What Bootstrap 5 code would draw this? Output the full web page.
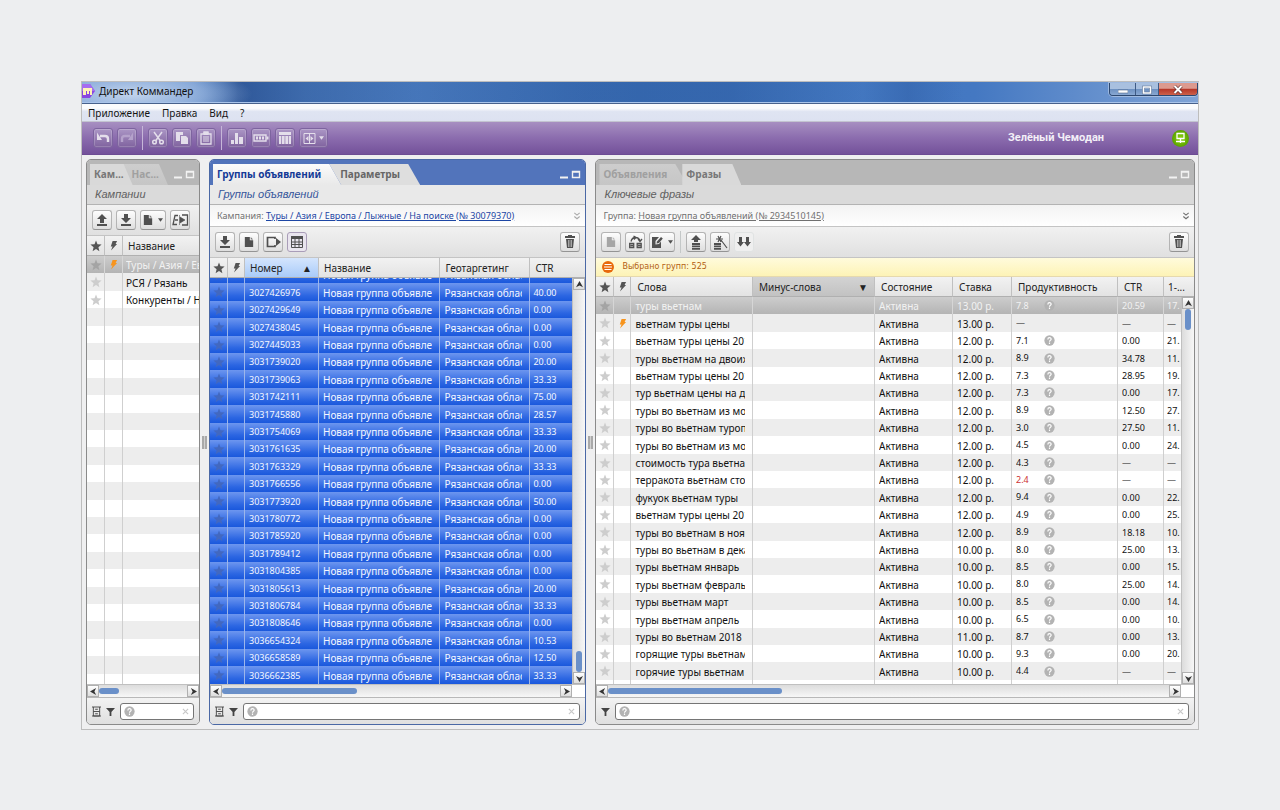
<!DOCTYPE html>
<html lang="ru">
<head>
<meta charset="utf-8">
<meta name="viewport" content="width=device-width, initial-scale=1">
<title>Директ Коммандер</title>
<link href="https://cdn.jsdelivr.net/npm/bootstrap@5.3.0/dist/css/bootstrap.min.css" rel="stylesheet">
<style>
  body { background: #edeef0; color: #1a1a1a; font: 10px/16px "Noto Sans", "Open Sans", sans-serif; padding: 81px; }
  button { font: inherit; padding: 0; color: inherit; }
  svg { display: block; flex: none; }

  .app-window { border: 1px solid #bdbdbd; background: #efeff0; }

  /* title bar */
  .titlebar {
    height: 22px; border-bottom: 1px solid #47618c; box-shadow: inset 0 -1px #a9c4ea; color: #111; padding-top: 1px;
    background:
      radial-gradient(ellipse 120px 30px at 50px 12px, rgba(205,220,240,.9), rgba(170,195,230,.6) 60%, transparent),
      linear-gradient(90deg, transparent 10%, rgba(10,45,110,.5) 14%, rgba(15,55,120,.3) 20%, rgba(20,60,130,.1) 30%, rgba(20,60,130,.25) 45%, rgba(20,60,130,.25) 58%, transparent 70%, rgba(20,60,130,.2) 74%, transparent 79%),
      linear-gradient(90deg, #5d89c8, #3f74bb 50%, #4478c2 80%, #7fa3d6);
  }
  .win-controls { height: 13px; border: 1px solid #2d4870; border-top: 0; border-radius: 0 0 4px 4px; overflow: hidden; box-shadow: 0 0 0 1px rgba(255,255,255,.35); }
  .win-controls button { border: 0; border-right: 1px solid #3f5b85; background: linear-gradient(#a9c0df 45%, #6f92c2 50%, #8dacd6); width: 26px; height: 13px; }
  .win-controls button:nth-child(2) { width: 23px; }
  .win-controls .win-close { width: 38px; border-right: 0; background: linear-gradient(#dc9a8f 40%, #b8392a 50%, #d06850); }

  /* menu */
  .menubar { height: 18px; background: linear-gradient(#fafbfd 25%, #dfe4f2 45%, #dde2f1); border-bottom: 1px solid #c3c4d0; padding: 0 2px; }
  .menubar a { color: #151515; text-decoration: none; }

  /* purple toolbar */
  .main-toolbar { height: 33px; background: linear-gradient(#a78fc1, #8b6cae 50%, #73519a); border-bottom: 1px solid #6d4c93; color: #fff; }
  .main-tools { padding-left: 11px; gap: 4px; }
  .tool-btn { width: 20px; height: 20px; border: 1px solid #7d649f; border-radius: 3px; background: linear-gradient(#ab96c5, #80639f); box-shadow: inset 0 0 0 1px rgba(255,255,255,.18); display: flex; align-items: center; justify-content: center; color: #e4deeb; }
  .tool-btn.wide { width: 29px; gap: 3px; }
  .tool-btn:disabled { color: #b5a2cb; }
  .tool-sep { width: 1px; height: 24px; background: #c6b6d8; margin: 0 1px; }
  .account { font: bold 11px/16px Roboto, "Liberation Sans", sans-serif; padding-right: 68px; color: #f3eff7; }
  .online { width: 17px; height: 17px; border-radius: 50%; background: radial-gradient(#8fd410, #5aa300 70%, #4a7f10); margin-right: 9px; }

  /* panels */
  .panels { padding: 4px 3px 4px 4px; }
  .panel { border: 1px solid #8a8a8a; border-radius: 5px; background: #ececec; overflow: hidden; min-width: 0; }
  .panel-a { flex: 0 0 114px; }
  .panel-b { flex: 377 1 0; border-color: #4a68a5; }
  .panel-c { flex: 600 1 0; }
  .gripper { flex: 0 0 9px; }
  .gripper i { width: 5px; height: 13px; border: solid #a9a9a9; border-width: 0 2px; background: #d0d0d0; }

  .tabbar { height: 25px; background: #b7b7b7; padding: 4px 3px 0 3px; }
  .panel-b .tabbar { background: #5274bb; }
  .tab { border: 0; height: 21px; padding: 0 20px 2px 4px; font-weight: 700; color: #a0a0a0; background: linear-gradient(#cdcdcd, #c6c6c6); clip-path: polygon(0 0, calc(100% - 12px) 0, 100% 100%, 0 100%); white-space: nowrap; text-align: left; }
  .tab.active { color: #777; background: #d9d9d9; position: relative; z-index: 1; }
  .tab + .tab { margin-left: -12px; padding-left: 11px; clip-path: polygon(0 0, calc(100% - 12px) 0, 100% 100%, 12px 100%); }
  .tab + .tab.active { clip-path: polygon(7px 0, calc(100% - 9px) 0, 100% 100%, 7px 100%); }
  .panel-a .tab { padding-right: 9px; clip-path: polygon(0 0, calc(100% - 9px) 0, 100% 100%, 0 100%); }
  .panel-b .tab { color: #666; background: #dedede; }
  .panel-b .tab.active { color: #143a96; background: linear-gradient(#fbfbfb, #e9e9e9); }
  .tab-ctl { border: 0; background: none; color: #f2f2f2; width: 12px; height: 12px; }

  .panel-title { height: 20px; background: #dadada; border-bottom: 1px solid #b3b3b3; padding: 0 8px; font: italic 11px/18px "Liberation Sans", Arial, sans-serif; color: #606060; }
  .panel-b .panel-title { background: #e9e9e9; color: #34549a; }
  .address { height: 22px; background: linear-gradient(#f3f3f3, #fff); border-bottom: 1px solid #c4c4c4; padding: 0 4px 0 7px; font-size: 9px; color: #707070; }
  .address a { color: #707070; }
  .panel-b .address a { color: #1c46a4; }
  .panel-b .address svg { color: #aaa; }
  .panel-tools { height: 31px; background: linear-gradient(#f1f1f1, #e0e0e0); border-bottom: 1px solid #c4c4c4; padding: 0 5px; gap: 4px; }
  .pbtn { width: 20px; height: 20px; border: 1px solid #b4b4b4; border-bottom-color: #949494; border-radius: 3px; background: linear-gradient(#fdfdfd, #dedede); color: #505050; display: flex; align-items: center; justify-content: center; flex: none; }
  .pbtn.wide { width: 26px; gap: 5px; }
  .pbtn.toggled { border-color: #a99db8; background: #e9e5ee; }
  .pbtn.flat { border-color: #e0e3e3; background: #efefef; }
  .pbtn:disabled { color: #a5a5a5; }
  .pbtn-sep { width: 1px; height: 22px; background: #c4c8c8; margin: 0 1px; }
  .notice { height: 19px; background: linear-gradient(#fffbdc, #fdf3b6); border-bottom: 1px solid #e6d9ae; color: #b35f14; font: 8px/16px "DejaVu Sans", sans-serif; padding: 0 6px; gap: 8px; }

  /* grids */
  .grid { width: 100%; table-layout: fixed; border-collapse: separate; border-spacing: 0; white-space: nowrap; }
  .grid th { height: 20px; padding: 0 6px 0 5px; font-weight: 400; border-right: 1px solid #c0c0c0; border-bottom: 1px solid #b0b0b0; background: linear-gradient(#f2f2f2, #e3e3e3); overflow: hidden; color: #222; }
  .panel-c .grid th { padding-left: 6px; }
  .grid th:last-child { border-right: 0; }
  .panel .grid th.ico, .grid td.ico { padding: 0; color: #555; }
  .ico svg { margin: auto; }
  .grid td { height: 17px; padding: 0 7px 0 4px; line-height: 18px; border-right: 1px solid #cfcfcf; color: #111; }
  .grid td.num { font-size: 9px; }
  .grid tr:nth-child(5n+2) td, .grid tr:nth-child(5n+4) td { height: 18px; }
  .grid td:last-child { border-right: 0; padding-right: 0; padding-left: 3px; }
  .grid td > div { overflow: hidden; height: 17px; }
  .grid tr:nth-child(even) td { background: #ededed; }
  .grid tr:nth-child(odd) td { background: #fff; }
  .grid td .star { color: #cdcdcd; }
  .grid tbody tr.chosen td { background: linear-gradient(#cdcdcd, #b4b4b4); color: #f2f2f2; border-color: #d6d6d6; }
  .grid tr.chosen .star { color: #a4a4a4; }
  .grid.all-chosen tbody td { background: linear-gradient(#6d96ef, #2c66e2 70%, #1a58dc); color: #f4f7ff; border-color: #9db6ea; }
  .grid.all-chosen .star { color: #4268c0; }
  .grid th.sorted { background: linear-gradient(#d4e5fd, #a9cbf9); }
  .panel-c .grid th.sorted { background: linear-gradient(#d3d3d3, #c2c2c2); }
  .prod { width: 28px; }
  .low { color: #c33 !important; }
  .bolt-on { color: #f7941d; }
  .rows { flex: 1 1 0px; min-height: 0; overflow: hidden; }
  .panel-c .rows { flex-basis: 387px; }
  .rows-view { overflow: hidden; min-width: 0; background: #fff; }
  .from-end { display: flex; flex-direction: column; justify-content: flex-end; }

  /* scroll bars */
  .vbar { width: 13px; flex: none; background: linear-gradient(90deg, #dcdcdc, #f7f7f7); border-left: 1px solid #c0c0c0; }
  .hbar { height: 13px; background: linear-gradient(#dcdcdc, #f7f7f7); border-top: 1px solid #c0c0c0; }
  .arrow { border: 1px solid #b0b0b0; background: linear-gradient(#fff, #ddd); width: 12px; height: 12px; color: #333; display: flex; align-items: center; justify-content: center; flex: none; }
  .thumb { background: #6a90c9; border-radius: 3px; }
  .hbar .thumb { height: 6px; }
  .vbar .thumb { width: 6px; height: 21px; }
  .corner { width: 13px; background: #fff; flex: none; align-self: stretch; }

  .panel-foot { height: 27px; background: linear-gradient(#f3f3f3, #dfdfdf); border-top: 1px solid #b8b8b8; padding: 0 5px; gap: 5px; color: #444; }
  .finder { height: 17px; border: 1px solid #757575; border-radius: 3px; background: #fff; padding: 0 4px 0 3px; color: #c8c8c8; min-width: 0; }
  .finder input { border: 0; outline: 0; background: none; min-width: 0; width: 100%; font: inherit; }
  .qm { color: #b3b3b3; }
</style>
</head>
<body>
<svg class="d-none" aria-hidden="true">
  <symbol id="star" viewBox="0 0 12 12"><path fill="currentColor" d="M6 .5 7.5 4.3 11.6 4.6 8.4 7.2 9.4 11.2 6 9 2.6 11.2 3.6 7.2 .4 4.6 4.5 4.3z"/></symbol>
  <symbol id="bolt" viewBox="0 0 10 12"><path fill="currentColor" d="M4 1h5L7.3 4.2H9L2.2 11.5 4 7H2z"/></symbol>
  <symbol id="q" viewBox="0 0 12 12"><circle cx="6" cy="6" r="5.6" fill="currentColor"/><path d="M4.2 4.8c0-2.5 3.6-2.4 3.6-.3C7.800 5.800 6 5.700 6 7.300M6 8.300v1.400" fill="none" stroke="#fff" stroke-width="1.300"/></symbol>
  <symbol id="x" viewBox="0 0 8 8"><path d="M1 1l6 6M7 1 1 7" stroke="currentColor" stroke-width="1.300" fill="none"/></symbol>
  <symbol id="page" viewBox="0 0 12 14"><path fill="currentColor" d="M1 1h6v4h4v8H1z"/><path fill="currentColor" opacity=".75" d="M8 1l3 3H8z"/></symbol>
  <symbol id="down" viewBox="0 0 12 14"><path fill="currentColor" d="M4 1h4v4h3L6 10 1 5h3zM1 11h10v2H1z"/></symbol>
  <symbol id="up" viewBox="0 0 12 14"><path fill="currentColor" d="M4 10h4V6h3L6 1 1 6h3zM1 11h10v2H1z"/></symbol>
  <symbol id="caret" viewBox="0 0 6 4"><path fill="currentColor" d="M0 0h6L3 4z"/></symbol>
  <symbol id="trash" viewBox="0 0 12 14"><path fill="currentColor" d="M4 0h4v1h3v2H1V1h3zM2 4h8l-1 9H3z"/><path stroke="#ccc" d="M4.500 5v7M7.500 5v7M6 5v7" stroke-width=".7"/></symbol>
  <symbol id="funnel" viewBox="0 0 10 10"><path fill="currentColor" d="M0 1h10L6 5.500V10H4V5.500z"/></symbol>
  <symbol id="cabinet" viewBox="0 0 10 12"><path d="M0 1h10M1.500 1v10h7V1M1.500 6h7M3.500 3.500h3M3.500 8.500h3M0 11h10" stroke="currentColor" fill="none"/></symbol>
  <symbol id="minw" viewBox="0 0 12 12"><path d="M2 9.500h8" stroke="currentColor" stroke-width="2"/></symbol>
  <symbol id="maxw" viewBox="0 0 12 12"><path d="M2.500 3.500h7v6h-7zM2 4h8" stroke="currentColor" stroke-width="1.400" fill="none"/></symbol>
  <symbol id="chev" viewBox="0 0 8 9"><path d="M1 1l3 2.500L7 1M1 5l3 2.500L7 5" stroke="currentColor" stroke-width="1.300" fill="none"/></symbol>
  <symbol id="al" viewBox="0 0 8 8"><path fill="currentColor" d="M7 0 0 4l7 4-2-4z"/></symbol>
  <symbol id="ar" viewBox="0 0 8 8"><path fill="currentColor" d="M1 0l7 4-7 4 2-4z"/></symbol>
  <symbol id="au" viewBox="0 0 8 8"><path fill="currentColor" d="M4 0l4 7-4-2-4 2z"/></symbol>
  <symbol id="ad" viewBox="0 0 8 8"><path fill="currentColor" d="M4 8 0 1l4 2 4-2z"/></symbol>
</svg>

<main class="app-window">
  <header class="titlebar d-flex align-items-start justify-content-between">
    <div class="d-flex align-items-center gap-1">
      <svg width="13" height="14" viewBox="0 0 13 14"><path d="M0 0h8l5 7-5 7H0z" fill="#8a46e0"/><path d="M0 0h8l5 7H0z" fill="#a66cf0"/><path d="M1 4h9v7H8V7H7v3H5V7H4v4H1z" fill="#fff3b8"/></svg>
      <span>Директ Коммандер</span>
    </div>
    <div class="win-controls d-flex">
      <button type="button" aria-label="Свернуть"><svg class="m-auto" width="10" height="10"><path d="M0 5h10v3H0z" fill="#fff" stroke="#536a8c" stroke-width=".6"/></svg></button>
      <button type="button" aria-label="Развернуть"><svg class="m-auto" width="10" height="10"><path d="M1.500 2h7v6h-7z" fill="none" stroke="#536a8c" stroke-width="2.600"/><path d="M1.500 2h7v6h-7z" fill="none" stroke="#fff" stroke-width="1.600"/></svg></button>
      <button type="button" class="win-close" aria-label="Закрыть"><svg class="m-auto" width="10" height="10"><path d="M1.500 1l7 7M8.500 1l-7 7" stroke="#5c2a2a" stroke-width="3.200"/><path d="M1.500 1l7 7M8.500 1l-7 7" stroke="#fff" stroke-width="2"/></svg></button>
    </div>
  </header>

  <nav class="menubar d-flex align-items-center gap-2">
    <a class="px-1" href="#">Приложение</a><a class="px-0" href="#">Правка</a><a class="px-1" href="#">Вид</a><a href="#">?</a>
  </nav>

  <div class="main-toolbar d-flex align-items-center">
    <div class="main-tools d-flex align-items-center">
      <button class="tool-btn" aria-label="Отменить"><svg width="14" height="14"><path d="M4 5h5q3 0 3 3v3" stroke="currentColor" stroke-width="2.400" fill="none"/><path d="M1 5.500V1.500L6 9H1z" fill="currentColor"/></svg></button>
      <button class="tool-btn" disabled aria-label="Повторить"><svg width="14" height="14"><path d="M10 5H5Q2 5 2 8v3" stroke="currentColor" stroke-width="2.400" fill="none"/><path d="M13 5.500V1.500L8 9h5z" fill="currentColor"/></svg></button>
      <i class="tool-sep"></i>
      <button class="tool-btn" aria-label="Вырезать"><svg width="14" height="14" fill="none" stroke="currentColor" stroke-width="1.500"><path d="M3 1l6.500 9M11 1 4.500 10"/><circle cx="3.500" cy="11" r="1.800"/><circle cx="10.500" cy="11" r="1.800"/></svg></button>
      <button class="tool-btn" aria-label="Копировать"><svg width="14" height="14" fill="currentColor"><path d="M1 1h7v3H5v6H1z"/><path d="M6 5h5l2 2v6H6z"/></svg></button>
      <button class="tool-btn" aria-label="Вставить"><svg width="14" height="14"><path d="M5 1h4v2h3v10H2V3h3z" fill="none" stroke="currentColor" stroke-width="1.300"/><path d="M4.500 1h5v3h-5zM4 5.500h6v1H4zm0 2h6v1H4zm0 2h6v1H4z" fill="currentColor"/></svg></button>
      <i class="tool-sep"></i>
      <button class="tool-btn" aria-label="Статистика"><svg width="14" height="14" fill="currentColor"><path d="M1 9h3v4H1zM5 2h3v11H5zM9 6h4v7H9z"/></svg></button>
      <button class="tool-btn" aria-label="Баллы"><svg width="16" height="14"><path d="M1 4h12v6H1z" fill="none" stroke="currentColor" stroke-width="1.400"/><path d="M3 5.500h2v3H3zm3 0h2v3H6zm3 0h2v3H9zM13.500 5.500h2v3h-2z" fill="currentColor"/></svg></button>
      <button class="tool-btn" aria-label="Столбцы"><svg width="14" height="14" fill="currentColor"><path d="M1 1h12v3H1zM1 5h2.300v8H1zm3 0h2.600v8H4zm3.300 0H10v8H7.300zM10.700 5H13v8h-2.300z"/></svg></button>
      <button class="tool-btn wide" aria-label="Вид панелей"><svg width="13" height="13"><path d="M1 1.500h11v10H1zM6.500 1v11" fill="none" stroke="currentColor"/><path d="M5.500 4v5L2.500 6.500zM7.500 4v5l3-2.500z" fill="currentColor"/></svg><svg width="5" height="4"><use href="#caret"/></svg></button>
    </div>
    <span class="account ms-auto">Зелёный Чемодан</span>
    <span class="online d-flex"><svg class="m-auto" width="11" height="12"><path d="M2 1.500h7v5H2zM5.500 7v4M1 9.500h9" stroke="#fff" stroke-width="1.300" fill="none"/></svg></span>
  </div>

  <div class="panels d-flex align-items-stretch">
    <section class="panel panel-a d-flex flex-column">
      <div class="tabbar d-flex align-items-start">
        <button class="tab active">Кам...</button><button class="tab">Нас...</button>
        <div class="d-flex ms-auto mt-1"><button class="tab-ctl" aria-label="Свернуть"><svg width="12" height="12"><use href="#minw"/></svg></button><button class="tab-ctl" aria-label="Развернуть"><svg width="12" height="12"><use href="#maxw"/></svg></button></div>
      </div>
      <div class="panel-title">Кампании</div>
      <div class="panel-tools d-flex align-items-center">
        <button class="pbtn" aria-label="Отправить"><svg width="12" height="14"><use href="#up"/></svg></button>
        <button class="pbtn" aria-label="Получить"><svg width="12" height="14"><use href="#down"/></svg></button>
        <button class="pbtn wide" aria-label="Создать"><svg width="10" height="12"><use href="#page"/></svg><svg width="5" height="4"><use href="#caret"/></svg></button>
        <button class="pbtn" aria-label="Переименовать"><svg width="17" height="12" fill="none" stroke="currentColor" stroke-width="1.300"><path d="M6 1.500H3L1 10.500h4M3 6h3M10 1h5.500v10H10"/><path d="M7.500 1v10M8 3l5 3-5 3z" fill="currentColor" stroke-width=".6"/></svg></button>
      </div>
      <table class="grid"><colgroup><col style="width:18px"><col style="width:18px"><col></colgroup>
        <thead><tr><th class="ico"><svg width="12" height="12"><use href="#star"/></svg></th><th class="ico"><svg width="9" height="11"><use href="#bolt"/></svg></th><th>Название</th></tr></thead></table>
      <div class="rows rows-view"><table class="grid"><colgroup><col style="width:18px"><col style="width:18px"><col></colgroup><tbody id="campaigns"></tbody></table></div>
      <div class="hbar d-flex align-items-center"><button class="arrow" aria-label="Влево"><svg width="7" height="7"><use href="#al"/></svg></button><i class="thumb" style="width:20px"></i><button class="arrow ms-auto" aria-label="Вправо"><svg width="7" height="7"><use href="#ar"/></svg></button></div>
      <div class="panel-foot d-flex align-items-center">
        <svg width="9" height="11"><use href="#cabinet"/></svg><svg width="9" height="9"><use href="#funnel"/></svg>
        <label class="finder d-flex align-items-center flex-fill"><svg class="qm" width="11" height="11"><use href="#q"/></svg><input type="text" aria-label="Поиск кампаний"><svg width="7" height="7"><use href="#x"/></svg></label>
      </div>
    </section>

    <div class="gripper d-flex align-items-center justify-content-center"><i></i></div>

    <section class="panel panel-b d-flex flex-column">
      <div class="tabbar d-flex align-items-start">
        <button class="tab active">Группы объявлений</button><button class="tab">Параметры</button>
        <div class="d-flex ms-auto mt-1"><button class="tab-ctl" aria-label="Свернуть"><svg width="12" height="12"><use href="#minw"/></svg></button><button class="tab-ctl" aria-label="Развернуть"><svg width="12" height="12"><use href="#maxw"/></svg></button></div>
      </div>
      <div class="panel-title">Группы объявлений</div>
      <div class="address d-flex align-items-center"><span>Кампания: <a href="#">Туры / Азия / Европа / Лыжные / На поиске (№ 30079370)</a></span><svg class="ms-auto" width="8" height="8"><use href="#chev"/></svg></div>
      <div class="panel-tools d-flex align-items-center">
        <button class="pbtn" aria-label="Получить"><svg width="12" height="14"><use href="#down"/></svg></button>
        <button class="pbtn" aria-label="Создать"><svg width="10" height="12"><use href="#page"/></svg></button>
        <button class="pbtn" aria-label="Переместить"><svg width="15" height="12"><path d="M6 1.500H1.500v9H9V9M6 1.500h3V3" fill="none" stroke="currentColor" stroke-width="1.700"/><path d="M10 2l5 4-5 4z" fill="currentColor"/></svg></button>
        <button class="pbtn toggled" aria-label="Таблица"><svg width="12" height="12"><path d="M.5 1h11v10.500H.5zM.5 6h11M.5 8.500h11M4 3v8M8 3v8" fill="none" stroke="currentColor"/><path d="M0 0h12v3H0z" fill="currentColor"/></svg></button>
        <button class="pbtn ms-auto" aria-label="Удалить"><svg width="12" height="14"><use href="#trash"/></svg></button>
      </div>
      <table class="grid"><colgroup id="cols-bh"></colgroup>
        <thead><tr><th class="ico"><svg width="12" height="12"><use href="#star"/></svg></th><th class="ico"><svg width="9" height="11"><use href="#bolt"/></svg></th><th class="sorted"><div class="d-flex justify-content-between"><span>Номер</span><span>▲</span></div></th><th>Название</th><th>Геотаргетинг</th><th>CTR</th></tr></thead></table>
      <div class="rows d-flex">
        <div class="rows-view from-end flex-fill"><table class="grid all-chosen"><colgroup id="cols-b"></colgroup><tbody id="groups"></tbody></table></div>
        <div class="vbar d-flex flex-column align-items-center"><button class="arrow" aria-label="Вверх"><svg width="7" height="7"><use href="#au"/></svg></button><i class="thumb mt-auto"></i><button class="arrow" aria-label="Вниз"><svg width="7" height="7"><use href="#ad"/></svg></button></div>
      </div>
      <div class="hbar d-flex align-items-center"><button class="arrow" aria-label="Влево"><svg width="7" height="7"><use href="#al"/></svg></button><i class="thumb" style="width:36%"></i><button class="arrow ms-auto" aria-label="Вправо"><svg width="7" height="7"><use href="#ar"/></svg></button><i class="corner"></i></div>
      <div class="panel-foot d-flex align-items-center">
        <svg width="9" height="11"><use href="#cabinet"/></svg><svg width="9" height="9"><use href="#funnel"/></svg>
        <label class="finder d-flex align-items-center flex-fill"><svg class="qm" width="11" height="11"><use href="#q"/></svg><input type="text" aria-label="Поиск групп"><svg width="7" height="7"><use href="#x"/></svg></label>
      </div>
    </section>

    <div class="gripper d-flex align-items-center justify-content-center"><i></i></div>

    <section class="panel panel-c d-flex flex-column">
      <div class="tabbar d-flex align-items-start">
        <button class="tab">Объявления</button><button class="tab active">Фразы</button>
        <div class="d-flex ms-auto mt-1"><button class="tab-ctl" aria-label="Свернуть"><svg width="12" height="12"><use href="#minw"/></svg></button><button class="tab-ctl" aria-label="Развернуть"><svg width="12" height="12"><use href="#maxw"/></svg></button></div>
      </div>
      <div class="panel-title">Ключевые фразы</div>
      <div class="address d-flex align-items-center"><span>Группа: <a href="#">Новая группа объявлений (№ 2934510145)</a></span><svg class="ms-auto" width="8" height="8"><use href="#chev"/></svg></div>
      <div class="panel-tools d-flex align-items-center">
        <button class="pbtn" disabled aria-label="Создать"><svg width="10" height="12"><use href="#page"/></svg></button>
        <button class="pbtn" aria-label="Заменить"><svg width="15" height="14" fill="none" stroke="currentColor" stroke-width="1.300"><path d="M1.700 8.500h4v4h-4zM9.200 8.500h4v4h-4zM2.500 10.500h2.500M10 10.500h2.500M3 6.500Q4 2.500 7.500 2.500T12 6M10 4l2 2.500L14 4M5.500 1 8 2.500 6 4.500"/></svg></button>
        <button class="pbtn wide" aria-label="Изменить"><svg width="12" height="12"><path d="M1 1h7L4.500 5v3.500L8 8l2-2.500V12H1z" fill="currentColor"/><path d="M5.500 7.500l.5-2L10 1l1.800 1.500L8 7z" fill="currentColor"/></svg><svg width="5" height="4"><use href="#caret"/></svg></button>
        <i class="pbtn-sep"></i>
        <button class="pbtn" aria-label="Поднять ставку"><svg width="12" height="15" fill="currentColor"><path d="M4 7h4V5h3L6 0 1 5h3z"/><path d="M2 8h8v2H2zM2 10.500h8v1.500H2zM2 12.700h8v2H2z"/></svg></button>
        <button class="pbtn" aria-label="Мастер ставок"><svg width="15" height="15" fill="currentColor"><path d="M1 8h7v2H1zM1 10.500h7v1.500H1zM1 12.700h7v2H1z"/><path d="M5 1l3 6M8 1 5 7M3 4h7M8 5l6 8" stroke="currentColor" stroke-width="1.200"/></svg></button>
        <button class="pbtn flat" aria-label="Свернуть все"><svg width="14" height="10" fill="currentColor"><path d="M2 0h3v5h2L3.500 9.500 0 5h2zM9 0h3v5h2l-3.500 4.500L7 5h2z"/></svg></button>
        <button class="pbtn ms-auto" aria-label="Удалить"><svg width="12" height="14"><use href="#trash"/></svg></button>
      </div>
      <div class="notice d-flex align-items-center"><svg width="12" height="12"><circle cx="6" cy="6" r="6" fill="#e8690b"/><path d="M2.500 3.500h7M2 6h8M2.500 8.500h7" stroke="#fff" stroke-width="1.200"/></svg><span>Выбрано групп: 525</span></div>
      <table class="grid"><colgroup id="cols-ch"></colgroup>
        <thead><tr><th class="ico"><svg width="12" height="12"><use href="#star"/></svg></th><th class="ico"><svg width="9" height="11"><use href="#bolt"/></svg></th><th>Слова</th><th class="sorted"><div class="d-flex justify-content-between"><span>Минус-слова</span><span>▼</span></div></th><th>Состояние</th><th>Ставка</th><th>Продуктивность</th><th>CTR</th><th class="px-1">1-...</th></tr></thead></table>
      <div class="rows d-flex">
        <div class="rows-view flex-fill"><table class="grid"><colgroup id="cols-c"></colgroup><tbody id="phrases"></tbody></table></div>
        <div class="vbar d-flex flex-column align-items-center"><button class="arrow" aria-label="Вверх"><svg width="7" height="7"><use href="#au"/></svg></button><i class="thumb"></i><button class="arrow mt-auto" aria-label="Вниз"><svg width="7" height="7"><use href="#ad"/></svg></button></div>
      </div>
      <div class="hbar d-flex align-items-center"><button class="arrow" aria-label="Влево"><svg width="7" height="7"><use href="#al"/></svg></button><i class="thumb" style="width:29%"></i><button class="arrow ms-auto" aria-label="Вправо"><svg width="7" height="7"><use href="#ar"/></svg></button><i class="corner"></i></div>
      <div class="panel-foot d-flex align-items-center">
        <svg width="9" height="9"><use href="#funnel"/></svg>
        <label class="finder d-flex align-items-center flex-fill"><svg class="qm" width="11" height="11"><use href="#q"/></svg><input type="text" aria-label="Поиск фраз"><svg width="7" height="7"><use href="#x"/></svg></label>
      </div>
    </section>
  </div>
</main>

<script src="https://cdn.jsdelivr.net/npm/bootstrap@5.3.0/dist/js/bootstrap.bundle.min.js"></script>
<script>
const star = '<td class="ico"><svg class="star" width="12" height="12"><use href="#star"/></svg></td>';
const bolt = on => `<td class="ico">${on ? '<svg class="bolt-on" width="9" height="11"><use href="#bolt"/></svg>' : ''}</td>`;
const cell = (t, cls = '') => `<td class="${cls}"><div>${t}</div></td>`;
const fill = (id, html) => { document.getElementById(id).innerHTML = html; };
const cols = list => list.map(w => w ? `<col style="width:${w}">` : '<col>').join('');

// header tables are wider than the row tables by the 13px scroll bar
fill('cols-bh', cols(['18px', '17px', '74px', '', '90px', '55px']));
fill('cols-b', cols(['18px', '17px', '74px', '', '90px', '42px']));
fill('cols-ch', cols(['18px', '17px', '', '122px', '78px', '59px', '106px', '46px', '30px']));
fill('cols-c', cols(['18px', '17px', '', '122px', '78px', '59px', '106px', '46px', '17px']));

// campaigns, padded with empty rows
const campaigns = ['Туры / Азия / Европа', 'РСЯ / Рязань', 'Конкуренты / НН', ...Array(22).fill('')];
fill('campaigns', campaigns.map((n, i) =>
  `<tr class="${i ? '' : 'chosen'}">${n ? star : '<td class="ico"></td>'}${bolt(i === 0)}${cell(n)}</tr>`).join(''));

const groups = `3027382307 20.00
3027426976 40.00
3027429649 0.00
3027438045 0.00
3027445033 0.00
3031739020 20.00
3031739063 33.33
3031742111 75.00
3031745880 28.57
3031754069 33.33
3031761635 20.00
3031763329 33.33
3031766556 0.00
3031773920 50.00
3031780772 0.00
3031785920 0.00
3031789412 0.00
3031804385 0.00
3031805613 20.00
3031806784 33.33
3031808646 0.00
3036654324 10.53
3036658589 12.50
3036662385 33.33`.split('\n').map(r => r.split(' '));
fill('groups', groups.map(([n, ctr]) =>
  `<tr>${star}${bolt(false)}${cell(n, 'num')}${cell('Новая группа объявлений')}${cell('Рязанская область')}${cell(ctr, 'num')}</tr>`).join(''));

const phrases = `туры вьетнам|13|7.8|20.59|17.
вьетнам туры цены|13|—|—|—
вьетнам туры цены 2018|12|7.1|0.00|21.
туры вьетнам на двоих|12|8.9|34.78|11.
вьетнам туры цены 2017|12|7.3|28.95|19.
тур вьетнам цены на двоих|12|7.3|0.00|17.
туры во вьетнам из москвы|12|8.9|12.50|27.
туры во вьетнам туроператор|12|3.0|27.50|11.
туры во вьетнам из москвы|12|4.5|0.00|24.
стоимость тура вьетнам|12|4.3|—|—
терракота вьетнам стоимость|12|2.4|—|—
фукуок вьетнам туры|12|9.4|0.00|22.
вьетнам туры цены 2018|12|4.9|0.00|25.
туры во вьетнам в ноябре|12|8.9|18.18|10.
туры во вьетнам в декабре|10|8.0|25.00|13.
туры вьетнам январь|10|8.5|0.00|15.
туры вьетнам февраль|10|8.0|25.00|14.
туры вьетнам март|10|8.5|0.00|14.
туры вьетнам апрель|10|6.5|0.00|10.
туры во вьетнам 2018|11|8.7|0.00|13.
горящие туры вьетнам|10|9.3|0.00|20.
горячие туры вьетнам|10|4.4|—|—`.split('\n').map(r => r.split('|'));
const help = '<svg class="qm" width="11" height="11"><use href="#q"/></svg>';
fill('phrases', phrases.map(([w, bid, prod, ctr, pos], i) =>
  `<tr class="${i ? '' : 'chosen'}">${star}${bolt(i === 1)}${cell(w)}${cell('')}${cell('Активна')}${cell(bid + '.00 р.')}` +
  `<td class="num"><div class="d-flex align-items-center"><span class="prod ${prod === '2.4' ? 'low' : ''}">${prod}</span>${prod === '—' ? '' : help}</div></td>` +
  `${cell(ctr, 'num')}${cell(pos, 'num')}</tr>`).join('') + '<tr>' + '<td></td>'.repeat(9) + '</tr>');
</script>
</body>
</html>
